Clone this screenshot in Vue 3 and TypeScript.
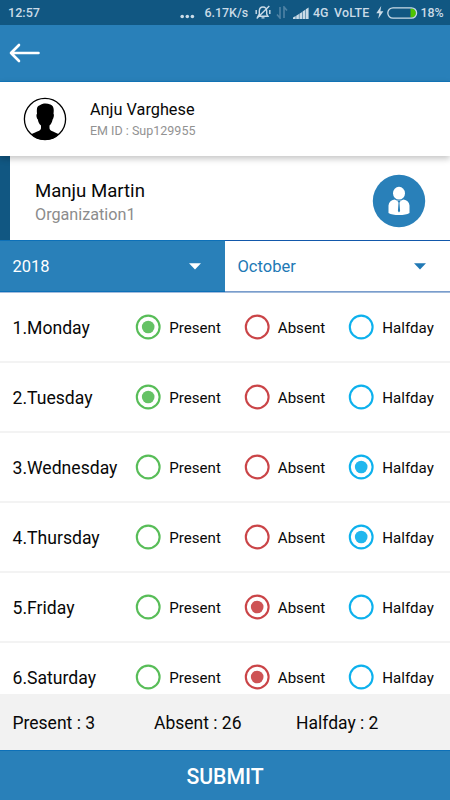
<script setup lang="ts">
import { reactive, ref } from 'vue'

type Status = 'present' | 'absent' | 'halfday'

interface Day {
  name: string
  status: Status
}

const options: { key: Status; label: string }[] = [
  { key: 'present', label: 'Present' },
  { key: 'absent', label: 'Absent' },
  { key: 'halfday', label: 'Halfday' },
]

const days = reactive<Day[]>([
  { name: 'Monday', status: 'present' },
  { name: 'Tuesday', status: 'present' },
  { name: 'Wednesday', status: 'halfday' },
  { name: 'Thursday', status: 'halfday' },
  { name: 'Friday', status: 'absent' },
  { name: 'Saturday', status: 'absent' },
])

const totals = ref([
  { label: 'Present', count: 3 },
  { label: 'Absent', count: 26 },
  { label: 'Halfday', count: 2 },
])
</script>

<template>
  <div class="screen">
    <div class="status-bar">
      <span class="clock">12:57</span>
      <svg class="dots" width="15" height="5" viewBox="0 0 15 5">
        <circle cx="2.2" cy="2.5" r="1.8" /><circle cx="7.3" cy="2.5" r="1.8" /><circle cx="12.4" cy="2.5" r="1.8" />
      </svg>
      <span class="speed">6.17K/s</span>
      <svg class="bell" width="16" height="15" viewBox="0 0 16 15">
        <path d="M3 11.300h10L11.700 9V6.200C11.700 3.700 10.300 2 8 2S4.300 3.700 4.300 6.200V9zM6.500 12.900h3M14.300 1L1.700 13.500M1.200 5v4M14.800 5v4" />
      </svg>
      <svg class="transfer" width="12" height="13" viewBox="0 0 12 13">
        <path d="M4 1v11L1 8.500M8 12V1l3 3.500" />
      </svg>
      <svg class="signal" width="16" height="12" viewBox="0 0 16 12">
        <path d="M0 12V10.500L2.700 9V12zM3.200 12V8.700L5.900 7V12zM6.400 12V6.700L9.100 5V12zM9.600 12V4.500L12.300 2.700V12zM12.800 12V2.300L15.600 .6V12z" />
      </svg>
      <span class="network">4G</span>
      <span class="volte">VoLTE</span>
      <svg class="bolt" width="8" height="13" viewBox="0 0 8 13">
        <path d="M5.200 0L.3 7.300H3.300L2.200 12.700L7.400 5.200H4.400z" />
      </svg>
      <svg class="battery" width="31" height="12" viewBox="0 0 31 12">
        <path class="charge" d="M23.500 1.500H25.500Q29 2.500 29 6T25.500 10.500H23.500z" />
        <rect class="shell" x=".8" y=".8" width="28.800" height="10.400" rx="5.200" />
      </svg>
      <span class="percent">18%</span>
    </div>

    <header class="toolbar">
      <svg width="32" height="20" viewBox="0 0 32 20">
        <path d="M29.500 10H2M10 2L2 10L10 18" />
      </svg>
    </header>

    <section class="supervisor">
      <svg class="avatar" width="44" height="44" viewBox="0 0 44 44">
        <circle cx="22" cy="22" r="20.600" />
        <path d="M8.500 37.500C11 35 18 34.500 18 31.300V28.500C16 27 15.200 24.500 14.900 22.400C13.500 21.500 13 17.500 14 16.800C13.500 10 14.500 9 17 8.200C19 6.300 24 6 27.300 7.500C30.500 8.500 31.300 12 30.500 16.800C31.400 17.500 30.700 21.500 29.600 22.400C29.200 25 28 27 26.500 28.500V31.300C26.500 34.500 33 35 35.700 37.500Q30 43 22 43T8.500 37.500z" />
      </svg>
      <div class="supervisor-text">
        <div class="supervisor-name">Anju Varghese</div>
        <div class="supervisor-id">EM ID : Sup129955</div>
      </div>
    </section>

    <section class="employee">
      <div class="employee-text">
        <div class="employee-name">Manju Martin</div>
        <div class="employee-org">Organization1</div>
      </div>
      <svg class="badge" width="54" height="54" viewBox="0 0 54 54">
        <circle class="disc" cx="27" cy="27" r="26.200" />
        <ellipse class="body" cx="27" cy="19.200" rx="6" ry="6.400" />
        <path class="body" d="M16.500 39V31.500Q17 26.500 22.500 25.500Q27 28 31.500 25.500Q37 26.500 37.500 31.500V39Q34 41 27 41T16.500 39z" />
        <path class="disc" d="M25.500 27H28.500L27.500 28.800L28.100 37L27 38.500L25.900 37L26.500 28.800z" />
      </svg>
    </section>

    <section class="pickers">
      <div class="picker year">
        <span>2018</span>
        <svg width="12" height="7" viewBox="0 0 12 7"><path d="M0 .3H12L6 6.500z" /></svg>
      </div>
      <div class="picker month">
        <span>October</span>
        <svg width="12" height="7" viewBox="0 0 12 7"><path d="M0 .3H12L6 6.500z" /></svg>
      </div>
    </section>

    <main class="days">
      <div v-for="(day, i) in days" :key="day.name" class="day">
        <span class="day-name">{{ i + 1 }}.{{ day.name }}</span>
        <div
          v-for="option in options"
          :key="option.key"
          class="option"
          :class="option.key"
          @click="day.status = option.key"
        >
          <svg width="26" height="26" viewBox="0 0 26 26">
            <circle class="ring" cx="13.200" cy="13" r="11.400" />
            <circle v-if="day.status === option.key" class="dot" cx="13.200" cy="13" r="6.300" />
          </svg>
          <span class="option-label">{{ option.label }}</span>
        </div>
      </div>
    </main>

    <section class="totals">
      <span v-for="total in totals" :key="total.label">{{ total.label }} : {{ total.count }}</span>
    </section>

    <button class="submit" type="button">SUBMIT</button>
  </div>
</template>

<style>
body {
  margin: 0;
  overflow: hidden;
}
</style>

<style scoped>
.screen {
  display: flex;
  flex-direction: column;
  width: 450px;
  height: 800px;
  overflow: hidden;
  background: #fff;
  color: #080808;
  font-family: Roboto, "Liberation Sans", sans-serif;
  white-space: nowrap;
}

.screen > * {
  flex-shrink: 0;
  box-sizing: border-box;
}

svg {
  display: block;
  flex: none;
}

.status-bar {
  display: grid;
  grid-template-columns: 172px 24.500px 50px 21px 17.500px 20px 21px 42px 11px 33.500px 1fr;
  align-items: center;
  height: 25px;
  padding-left: 8px;
  background: #115782;
  color: #cadbe7;
  font-size: 12.400px;
  font-weight: 500;
  line-height: 24px;
}

.status-bar svg {
  fill: #cadbe7;
}

.status-bar .dots {
  margin-top: 7px;
}

.clock {
  font-size: 12.600px;
}

.status-bar .bell {
  fill: none;
  stroke: #cadbe7;
  stroke-width: 1.4;
}

.status-bar .transfer {
  fill: none;
  stroke: #4f83a5;
  stroke-width: 1.6;
}

.volte {
  letter-spacing: 0.2px;
}

.status-bar .charge {
  fill: #4fc400;
}

.status-bar .shell {
  fill: none;
  stroke: #cadbe7;
  stroke-width: 1.3;
}

.toolbar {
  display: flex;
  align-items: center;
  height: 56px;
  padding-left: 9px;
  background: #2980b9;
}

.toolbar path {
  fill: none;
  stroke: #fff;
  stroke-width: 2.6;
  stroke-linecap: round;
  stroke-linejoin: round;
}

.supervisor {
  position: relative;
  z-index: 1;
  display: flex;
  align-items: center;
  height: 75px;
  padding-left: 23px;
  border-top: 1px solid #1273b5;
  background: #fff;
  box-shadow: 0 3px 6px rgba(0, 0, 0, 0.22);
}

.avatar circle {
  fill: #fff;
  stroke: #000;
  stroke-width: 1.3;
}

.supervisor-text {
  margin-left: 23px;
  padding-top: 2px;
}

.supervisor-name {
  font-size: 16.300px;
  line-height: 22px;
}

.supervisor-id {
  color: #929292;
  font-size: 12.500px;
  line-height: 20px;
}

.employee {
  display: flex;
  align-items: center;
  justify-content: space-between;
  height: 84px;
  padding: 6px 24px 0 25px;
  border-left: 10px solid #115782;
}

.employee-text {
  padding-top: 4px;
}

.employee-name {
  font-size: 18.600px;
  line-height: 24px;
}

.employee-org {
  color: #8c8c8c;
  font-size: 16.200px;
  line-height: 24px;
}

.disc {
  fill: #2980b9;
}

.body {
  fill: #fff;
}

.pickers {
  display: grid;
  grid-template-columns: 1fr 1fr;
  height: 53px;
}

.picker {
  display: flex;
  align-items: center;
  justify-content: space-between;
  padding: 0 24px 0 12.500px;
  border-top: 1px solid #1258ab;
  border-bottom: 1px solid #a3bcdc;
  font-size: 16.500px;
}

.year {
  border-top-color: #0d70b8;
  box-shadow: inset 0 -1px #0d70b8;
  background: #2980b9;
  background-clip: padding-box;
  color: #fff;
}

.month {
  box-shadow: inset 0 -1px #7a9dcc;
  color: #2179b5;
}

.picker path {
  fill: currentColor;
}

.days {
  height: 401px;
  overflow: hidden;
}

.day {
  display: grid;
  grid-template-columns: 122.500px 108.500px 104.500px 1fr;
  align-items: center;
  box-sizing: border-box;
  height: 70px;
  padding-left: 12.500px;
  border-bottom: 2px solid #f3f3f3;
}

.day-name {
  padding-top: 2px;
  font-size: 17.600px;
}

.option {
  display: flex;
  align-items: center;
  gap: 8.300px;
  font-size: 15.100px;
}

.option-label {
  padding-top: 1px;
}

.present {
  color: #58bd58;
}

.absent {
  color: #ca4447;
}

.halfday {
  color: #0db1ed;
}

.option-label {
  color: #080808;
}

.ring {
  fill: none;
  stroke: currentColor;
  stroke-width: 2.1;
}

.dot {
  fill: currentColor;
  opacity: 0.92;
}

.totals {
  display: grid;
  grid-template-columns: 141.500px 142px 1fr;
  align-items: center;
  height: 56px;
  padding: 2px 0 0 12.500px;
  background: #f2f2f2;
  font-size: 17.500px;
}

.submit {
  height: 50px;
  margin: 0;
  padding: 1px 0 0;
  border: 0;
  border-top: 1px solid #0d70b8;
  background: #2980b9;
  color: #fff;
  font-family: inherit;
  font-size: 21.200px;
  font-weight: 500;
}
</style>
